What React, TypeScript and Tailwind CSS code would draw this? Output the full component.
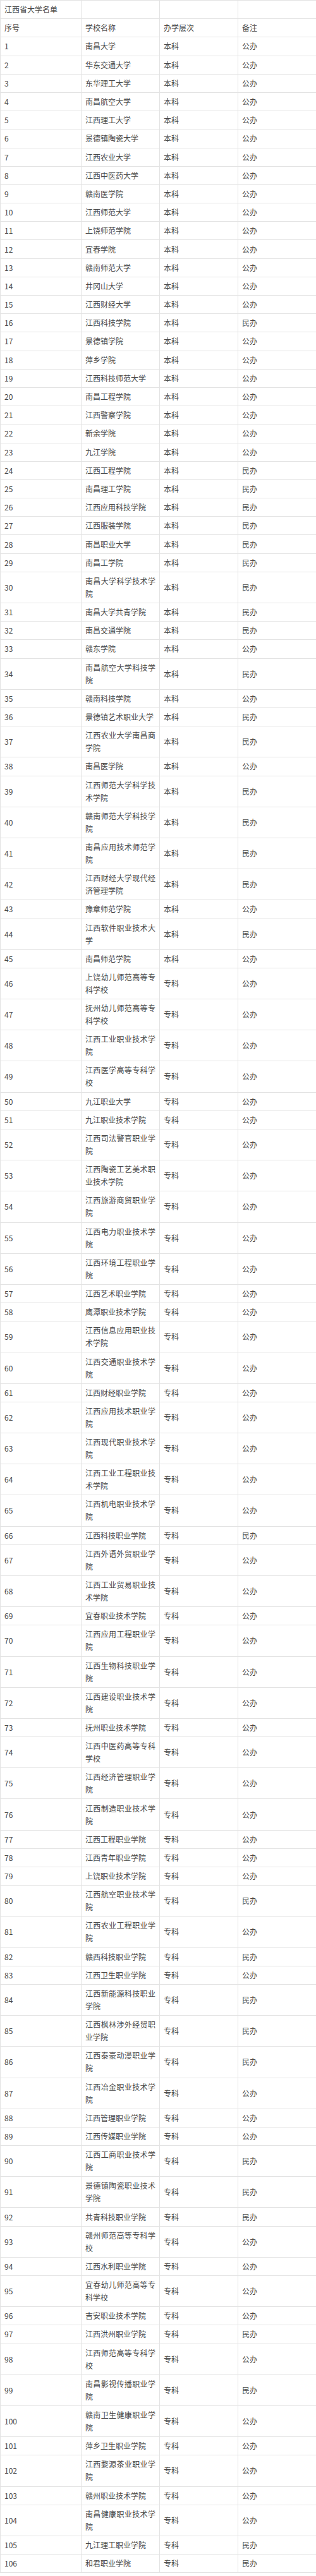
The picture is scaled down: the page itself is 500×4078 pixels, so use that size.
const ROWS: [string, string, string][] = [
  ['南昌大学', '本科', '公办'],
  ['华东交通大学', '本科', '公办'],
  ['东华理工大学', '本科', '公办'],
  ['南昌航空大学', '本科', '公办'],
  ['江西理工大学', '本科', '公办'],
  ['景德镇陶瓷大学', '本科', '公办'],
  ['江西农业大学', '本科', '公办'],
  ['江西中医药大学', '本科', '公办'],
  ['赣南医学院', '本科', '公办'],
  ['江西师范大学', '本科', '公办'],
  ['上饶师范学院', '本科', '公办'],
  ['宜春学院', '本科', '公办'],
  ['赣南师范大学', '本科', '公办'],
  ['井冈山大学', '本科', '公办'],
  ['江西财经大学', '本科', '公办'],
  ['江西科技学院', '本科', '民办'],
  ['景德镇学院', '本科', '公办'],
  ['萍乡学院', '本科', '公办'],
  ['江西科技师范大学', '本科', '公办'],
  ['南昌工程学院', '本科', '公办'],
  ['江西警察学院', '本科', '公办'],
  ['新余学院', '本科', '公办'],
  ['九江学院', '本科', '公办'],
  ['江西工程学院', '本科', '民办'],
  ['南昌理工学院', '本科', '民办'],
  ['江西应用科技学院', '本科', '民办'],
  ['江西服装学院', '本科', '民办'],
  ['南昌职业大学', '本科', '民办'],
  ['南昌工学院', '本科', '民办'],
  ['南昌大学科学技术学院', '本科', '民办'],
  ['南昌大学共青学院', '本科', '民办'],
  ['南昌交通学院', '本科', '民办'],
  ['赣东学院', '本科', '公办'],
  ['南昌航空大学科技学院', '本科', '民办'],
  ['赣南科技学院', '本科', '公办'],
  ['景德镇艺术职业大学', '本科', '民办'],
  ['江西农业大学南昌商学院', '本科', '民办'],
  ['南昌医学院', '本科', '公办'],
  ['江西师范大学科学技术学院', '本科', '民办'],
  ['赣南师范大学科技学院', '本科', '民办'],
  ['南昌应用技术师范学院', '本科', '民办'],
  ['江西财经大学现代经济管理学院', '本科', '民办'],
  ['豫章师范学院', '本科', '公办'],
  ['江西软件职业技术大学', '本科', '民办'],
  ['南昌师范学院', '本科', '公办'],
  ['上饶幼儿师范高等专科学校', '专科', '公办'],
  ['抚州幼儿师范高等专科学校', '专科', '公办'],
  ['江西工业职业技术学院', '专科', '公办'],
  ['江西医学高等专科学校', '专科', '公办'],
  ['九江职业大学', '专科', '公办'],
  ['九江职业技术学院', '专科', '公办'],
  ['江西司法警官职业学院', '专科', '公办'],
  ['江西陶瓷工艺美术职业技术学院', '专科', '公办'],
  ['江西旅游商贸职业学院', '专科', '公办'],
  ['江西电力职业技术学院', '专科', '公办'],
  ['江西环境工程职业学院', '专科', '公办'],
  ['江西艺术职业学院', '专科', '公办'],
  ['鹰潭职业技术学院', '专科', '公办'],
  ['江西信息应用职业技术学院', '专科', '公办'],
  ['江西交通职业技术学院', '专科', '公办'],
  ['江西财经职业学院', '专科', '公办'],
  ['江西应用技术职业学院', '专科', '公办'],
  ['江西现代职业技术学院', '专科', '公办'],
  ['江西工业工程职业技术学院', '专科', '公办'],
  ['江西机电职业技术学院', '专科', '公办'],
  ['江西科技职业学院', '专科', '民办'],
  ['江西外语外贸职业学院', '专科', '公办'],
  ['江西工业贸易职业技术学院', '专科', '公办'],
  ['宜春职业技术学院', '专科', '公办'],
  ['江西应用工程职业学院', '专科', '公办'],
  ['江西生物科技职业学院', '专科', '公办'],
  ['江西建设职业技术学院', '专科', '公办'],
  ['抚州职业技术学院', '专科', '公办'],
  ['江西中医药高等专科学校', '专科', '公办'],
  ['江西经济管理职业学院', '专科', '公办'],
  ['江西制造职业技术学院', '专科', '公办'],
  ['江西工程职业学院', '专科', '公办'],
  ['江西青年职业学院', '专科', '公办'],
  ['上饶职业技术学院', '专科', '公办'],
  ['江西航空职业技术学院', '专科', '民办'],
  ['江西农业工程职业学院', '专科', '公办'],
  ['赣西科技职业学院', '专科', '民办'],
  ['江西卫生职业学院', '专科', '公办'],
  ['江西新能源科技职业学院', '专科', '民办'],
  ['江西枫林涉外经贸职业学院', '专科', '民办'],
  ['江西泰豪动漫职业学院', '专科', '民办'],
  ['江西冶金职业技术学院', '专科', '公办'],
  ['江西管理职业学院', '专科', '公办'],
  ['江西传媒职业学院', '专科', '公办'],
  ['江西工商职业技术学院', '专科', '民办'],
  ['景德镇陶瓷职业技术学院', '专科', '民办'],
  ['共青科技职业学院', '专科', '民办'],
  ['赣州师范高等专科学校', '专科', '公办'],
  ['江西水利职业学院', '专科', '公办'],
  ['宜春幼儿师范高等专科学校', '专科', '公办'],
  ['吉安职业技术学院', '专科', '公办'],
  ['江西洪州职业学院', '专科', '民办'],
  ['江西师范高等专科学校', '专科', '公办'],
  ['南昌影视传播职业学院', '专科', '民办'],
  ['赣南卫生健康职业学院', '专科', '公办'],
  ['萍乡卫生职业学院', '专科', '公办'],
  ['江西婺源茶业职业学院', '专科', '公办'],
  ['赣州职业技术学院', '专科', '公办'],
  ['南昌健康职业技术学院', '专科', '公办'],
  ['九江理工职业学院', '专科', '民办'],
  ['和君职业学院', '专科', '民办'],
]

const cell = 'border border-[#e3e3e3] px-[6px] py-[4.1px] align-middle'

function Row({ cells }: { cells: string[] }) {
  return (
    <tr>
      {cells.map((c, i) => (
        <td key={i} className={`${cell} ${i === 1 ? 'text-justify' : 'text-left'}`}>
          {c}
        </td>
      ))}
    </tr>
  )
}

export default function App() {
  return (
    <div className="w-[500px] bg-white">
      <table
        className="w-[500px] table-fixed border-collapse text-[12px] leading-[20px] text-[#484848]"
        style={{ fontFamily: '"Noto Sans CJK SC", "Noto Sans", sans-serif' }}
      >
        <colgroup>
          <col className="w-[128px]" />
          <col className="w-[124px]" />
          <col className="w-[124px]" />
          <col className="w-[124px]" />
        </colgroup>
        <tbody>
          <Row cells={['江西省大学名单', '', '', '']} />
          <Row cells={['序号', '学校名称', '办学层次', '备注']} />
          {ROWS.map((r, i) => (
            <Row key={i} cells={[String(i + 1), ...r]} />
          ))}
        </tbody>
      </table>
    </div>
  )
}
